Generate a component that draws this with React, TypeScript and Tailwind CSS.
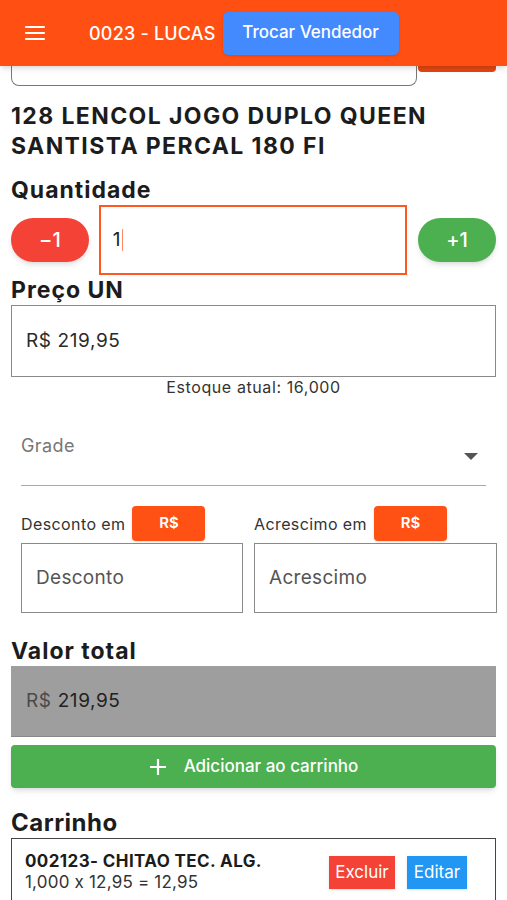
import React from "react";

const font = { fontFamily: "Inter, 'Noto Sans', sans-serif" };

function Hamburger() {
  return (
    <svg width="24" height="24" viewBox="0 0 24 24" className="text-white">
      <path d="M3 6h18M3 12h18M3 18h18" stroke="currentColor" strokeWidth="2.2" strokeLinecap="round" />
    </svg>
  );
}

function Field({ value, placeholder, className }: { value?: string; placeholder?: string; className?: string }) {
  return (
    <div className={`flex items-center border border-[#8a8a8a] px-[14px] text-[19px] tracking-[0.3px] ${className ?? ""}`}>
      {value ? <span className="text-[#2a2a2a]">{value}</span> : <span className="text-[#555]">{placeholder}</span>}
    </div>
  );
}

export default function App() {
  return (
    <div
      className="w-[507px] h-[900px] overflow-hidden bg-white text-[#1c1c1c] [font-feature-settings:'calt'_0]"
      style={font}
    >
      {/* app bar */}
      <header className="relative z-10 flex h-[66px] items-center bg-[#ff4f12] shadow-md">
        <div className="ml-[23px]">
          <Hamburger />
        </div>
        <span className="ml-[42px] text-[18px] font-medium tracking-[0.2px] text-white">0023 - LUCAS</span>
        <button className="ml-[7px] h-[43px] w-[176px] rounded-[5px] bg-[#448aff] text-[17px] font-medium text-white shadow">
          Trocar Vendedor
        </button>
      </header>

      <div className="px-[11px]">
        {/* scrolled search row, mostly under the bar */}
        <div className="flex items-start">
          <div className="h-[20px] w-[407px] rounded-b-[8px] border-x border-b border-[#777]" />
          <div className="ml-[1px] h-[6px] w-[78px] rounded-b-[4px] bg-[#e4460f]" />
        </div>

        <h1 className="mt-[15px] text-[23px] font-bold leading-[30px] tracking-[1.4px] text-[#1c1c1c]">
          128 LENCOL JOGO DUPLO QUEEN SANTISTA PERCAL 180 FI
        </h1>

        <h2 className="mt-[14px] text-[23px] font-bold leading-[30px] tracking-[1px]">Quantidade</h2>
        <div className="flex items-center">
          <button className="h-[44px] w-[78px] rounded-full bg-[#f44336] text-[20px] font-medium text-white shadow-md">
            −1
          </button>
          <div className="ml-[10px] flex h-[70px] w-[309px] items-center border-2 border-[#ff5722] px-[12px] text-[19px] text-[#222]">
            1<span className="ml-[1px] h-[22px] w-[1px] bg-[#ff8a65]" />
          </div>
          <button className="ml-[11px] h-[44px] w-[78px] rounded-full bg-[#4caf50] text-[20px] font-medium text-white shadow-md">
            +1
          </button>
        </div>

        <h2 className="text-[23px] font-bold leading-[30px] tracking-[1px]">Preço UN</h2>
        <Field value="R$ 219,95" className="h-[72px] tracking-[0.6px]" />
        <p className="text-center text-[16px] leading-[20px] tracking-[0.6px] text-[#333]">Estoque atual: 16,000</p>

        {/* grade dropdown */}
        <div className="ml-[10px] mr-[10px] mt-[38px] flex h-[51px] items-start justify-between border-b border-[#aaa] pt-[1px]">
          <span className="text-[18px] leading-[20px] tracking-[0.4px] text-[#777]">Grade</span>
          <svg width="14" height="8" viewBox="0 0 14 8" className="mr-[8px] mt-[17px]">
            <path d="M0 0h14L7 7z" fill="#555" />
          </svg>
        </div>

        {/* desconto / acrescimo */}
        <div className="mt-[20px] flex gap-[11px]">
          <div className="w-[232px] pl-[10px]">
            <div className="flex items-center">
              <span className="text-[16px] tracking-[0.4px] text-[#333]">Desconto em</span>
              <button className="ml-[7px] h-[35px] w-[73px] rounded-[4px] bg-[#ff5113] text-[15px] font-semibold text-white shadow">
                R$
              </button>
            </div>
            <Field placeholder="Desconto" className="mt-[2px] h-[70px] w-[222px]" />
          </div>
          <div className="w-[243px]">
            <div className="flex items-center">
              <span className="text-[16px] tracking-[0.4px] text-[#333]">Acrescimo em</span>
              <button className="ml-[7px] h-[35px] w-[73px] rounded-[4px] bg-[#ff5113] text-[15px] font-semibold text-white shadow">
                R$
              </button>
            </div>
            <Field placeholder="Acrescimo" className="mt-[2px] h-[70px] w-[243px]" />
          </div>
        </div>

        <h2 className="mt-[23px] text-[23px] font-bold leading-[30px] tracking-[1px]">Valor total</h2>
        <div className="flex h-[71px] items-center border-b border-[#888] bg-[#9e9e9e] px-[15px] text-[19px] tracking-[0.6px]">
          <span className="text-[#4a4a4a]">R$</span>
          <span className="ml-[6px] text-[#222]">219,95</span>
        </div>

        <button className="mt-[8px] flex h-[43px] w-full items-center justify-center gap-[17px] rounded-[4px] bg-[#4caf50] text-[17px] font-medium text-white shadow-md">
          <svg width="18" height="18" viewBox="0 0 18 18">
            <path d="M9 1v16M1 9h16" stroke="white" strokeWidth="2.2" />
          </svg>
          Adicionar ao carrinho
        </button>

        <h2 className="mt-[20px] text-[24px] font-bold leading-[30px] tracking-[0.5px]">Carrinho</h2>
        <div className="flex h-[80px] items-start justify-between border-[1.5px] border-[#444] pl-[13px] pr-[28px] pt-[12px]">
          <div>
            <p className="text-[17px] font-bold leading-[21px] tracking-[0.4px] text-[#1c1c1c]">002123- CHITAO TEC. ALG.</p>
            <p className="text-[17px] leading-[21px] tracking-[0.2px] text-[#333]">1,000 x 12,95 = 12,95</p>
          </div>
          <div className="mt-[5px] flex gap-[12px]">
            <button className="h-[33px] w-[66px] bg-[#f44336] text-[17px] text-white shadow-sm">Excluir</button>
            <button className="h-[33px] w-[60px] bg-[#2196f3] text-[17px] text-white shadow-sm">Editar</button>
          </div>
        </div>
      </div>
    </div>
  );
}
